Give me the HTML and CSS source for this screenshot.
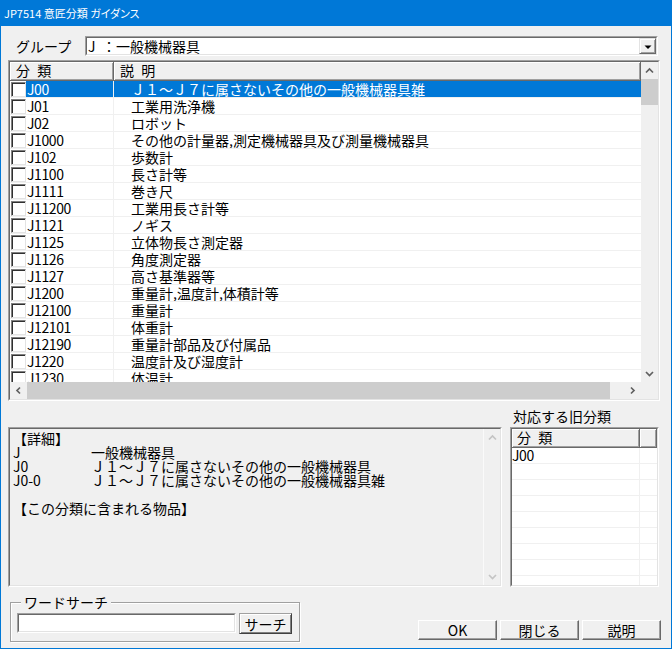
FILE: index.html
```html
<!DOCTYPE html>
<html lang="ja">
<head>
<meta charset="utf-8">
<title>JP7514 意匠分類 ガイダンス</title>
<link rel="stylesheet" href="styles.css">
</head>
<body>
<div class="window">
  <div class="titlebar">JP7514 意匠分類 ガイダンス</div>
  <div class="client">
    <div class="group-row">
      <span class="group-label">グループ</span>
      <div class="combo sunken">
        <div class="in combo-in">
          <span class="combo-text"><span class="combo-key">J</span>：一般機械器具</span>
          <span class="combo-btn raised"><svg width="14" height="15" viewBox="0 0 14 15"><polygon points="3.5,6.5 10.5,6.5 7,10" fill="#000"/></svg></span>
        </div>
      </div>
    </div>

    <div class="list sunken">
      <div class="in list-in">
        <div class="list-main">
          <div class="lhdr">
            <div class="hcell">分 類</div>
            <div class="hcell">説 明</div>
          </div>
          <div class="rows">
            <div class="row sel"><div class="cc"><span class="chk"></span><span class="code">J00</span></div><div class="dc">Ｊ１～Ｊ７に属さないその他の一般機械器具雑</div></div>
            <div class="row"><div class="cc"><span class="chk"></span><span class="code">J01</span></div><div class="dc">工業用洗浄機</div></div>
            <div class="row"><div class="cc"><span class="chk"></span><span class="code">J02</span></div><div class="dc">ロボット</div></div>
            <div class="row"><div class="cc"><span class="chk"></span><span class="code">J1000</span></div><div class="dc">その他の計量器,測定機械器具及び測量機械器具</div></div>
            <div class="row"><div class="cc"><span class="chk"></span><span class="code">J102</span></div><div class="dc">歩数計</div></div>
            <div class="row"><div class="cc"><span class="chk"></span><span class="code">J1100</span></div><div class="dc">長さ計等</div></div>
            <div class="row"><div class="cc"><span class="chk"></span><span class="code">J1111</span></div><div class="dc">巻き尺</div></div>
            <div class="row"><div class="cc"><span class="chk"></span><span class="code">J11200</span></div><div class="dc">工業用長さ計等</div></div>
            <div class="row"><div class="cc"><span class="chk"></span><span class="code">J1121</span></div><div class="dc">ノギス</div></div>
            <div class="row"><div class="cc"><span class="chk"></span><span class="code">J1125</span></div><div class="dc">立体物長さ測定器</div></div>
            <div class="row"><div class="cc"><span class="chk"></span><span class="code">J1126</span></div><div class="dc">角度測定器</div></div>
            <div class="row"><div class="cc"><span class="chk"></span><span class="code">J1127</span></div><div class="dc">高さ基準器等</div></div>
            <div class="row"><div class="cc"><span class="chk"></span><span class="code">J1200</span></div><div class="dc">重量計,温度計,体積計等</div></div>
            <div class="row"><div class="cc"><span class="chk"></span><span class="code">J12100</span></div><div class="dc">重量計</div></div>
            <div class="row"><div class="cc"><span class="chk"></span><span class="code">J12101</span></div><div class="dc">体重計</div></div>
            <div class="row"><div class="cc"><span class="chk"></span><span class="code">J12190</span></div><div class="dc">重量計部品及び付属品</div></div>
            <div class="row"><div class="cc"><span class="chk"></span><span class="code">J1220</span></div><div class="dc">温度計及び湿度計</div></div>
            <div class="row"><div class="cc"><span class="chk"></span><span class="code">J1230</span></div><div class="dc">体温計</div></div>
          </div>
        </div>
        <div class="vscroll">
          <span class="sb-btn"><svg width="17" height="17" viewBox="0 0 17 17"><polyline points="5,10.5 8.5,7 12,10.5" fill="none" stroke="#606060" stroke-width="1.7"/></svg></span>
          <span class="vthumb"></span>
          <span class="sb-fill"></span>
          <span class="sb-btn"><svg width="17" height="17" viewBox="0 0 17 17"><polyline points="5,7 8.5,10.5 12,7" fill="none" stroke="#606060" stroke-width="1.7"/></svg></span>
        </div>
        <div class="hscroll">
          <span class="sb-btn"><svg width="17" height="17" viewBox="0 0 17 17"><polyline points="10,5.5 7,8.5 10,11.5" fill="none" stroke="#606060" stroke-width="1.7"/></svg></span>
          <span class="hthumb"></span>
          <span class="sb-fill"></span>
          <span class="sb-btn"><svg width="17" height="17" viewBox="0 0 17 17"><polyline points="7,5.5 10,8.5 7,11.5" fill="none" stroke="#606060" stroke-width="1.7"/></svg></span>
        </div>
        <div class="corner"></div>
      </div>
    </div>

    <div class="lower">
      <div class="old-label">対応する旧分類</div>
      <div class="detail sunken">
        <div class="in detail-in">
          <div class="dtext">
            <div class="dline">【詳細】</div>
            <div class="dline"><span class="dcode">J</span>一般機械器具</div>
            <div class="dline"><span class="dcode">J0</span>Ｊ１～Ｊ７に属さないその他の一般機械器具</div>
            <div class="dline"><span class="dcode">J0-0</span>Ｊ１～Ｊ７に属さないその他の一般機械器具雑</div>
            <div class="dline"></div>
            <div class="dline">【この分類に含まれる物品】</div>
          </div>
          <div class="dscroll">
            <span class="sb-btn"><svg width="17" height="17" viewBox="0 0 17 17"><polyline points="5,10.5 8.5,7 12,10.5" fill="none" stroke="#c4c4c4" stroke-width="1.7"/></svg></span>
            <span class="sb-fill"></span>
            <span class="sb-btn"><svg width="17" height="17" viewBox="0 0 17 17"><polyline points="5,7 8.5,10.5 12,7" fill="none" stroke="#c4c4c4" stroke-width="1.7"/></svg></span>
          </div>
        </div>
      </div>
      <div class="oldlist sunken">
        <div class="in oldlist-in">
          <div class="ohdr">
            <div class="hcell">分 類</div>
            <div class="hcell"></div>
          </div>
          <div class="orow"><div class="oc">J00</div><div class="oc2"></div></div>
          <div class="orow"><div class="oc"></div><div class="oc2"></div></div>
          <div class="orow"><div class="oc"></div><div class="oc2"></div></div>
          <div class="orow"><div class="oc"></div><div class="oc2"></div></div>
          <div class="orow"><div class="oc"></div><div class="oc2"></div></div>
          <div class="orow"><div class="oc"></div><div class="oc2"></div></div>
          <div class="orow"><div class="oc"></div><div class="oc2"></div></div>
          <div class="orow"><div class="oc"></div><div class="oc2"></div></div>
          <div class="orow"><div class="oc"></div><div class="oc2"></div></div>
        </div>
      </div>
    </div>

    <div class="bottom">
      <fieldset class="wsearch">
        <legend>ワードサーチ</legend>
        <div class="search-row">
          <div class="search-input sunken"><div class="in input-in"></div></div>
          <button class="btn default">サーチ</button>
        </div>
      </fieldset>
      <div class="buttons">
        <button class="btn">OK</button>
        <button class="btn">閉じる</button>
        <button class="btn">説明</button>
      </div>
    </div>
  </div>
</div>
</body>
</html>
```

FILE: styles.css
```css
* { box-sizing: border-box; }
html, body { margin: 0; padding: 0; }
body {
  width: 672px;
  height: 649px;
  overflow: hidden;
  font-family: "Noto Sans CJK JP", "Noto Sans", sans-serif;
  font-size: 14px;
  color: #000;
  background: #f0f0f0;
}
.window {
  width: 672px;
  height: 649px;
  border: 1px solid #0078d7;
  border-top: 0;
  background: #f0f0f0;
  display: flex;
  flex-direction: column;
}
.titlebar {
  height: 26px;
  flex: none;
  background: #0078d7;
  color: #fff;
  font-size: 11px;
  line-height: 26px;
  padding-left: 3px;
  white-space: nowrap;
  font-feature-settings: "palt";
}
.client { flex: 1; display: flex; flex-direction: column; }

.sunken {
  border: 1px solid;
  border-color: #a0a0a0 #fff #fff #a0a0a0;
}
.sunken > .in {
  border: 1px solid;
  border-color: #696969 #e3e3e3 #e3e3e3 #696969;
  height: 100%;
}
.raised {
  background: #f0f0f0;
  border: 1px solid;
  border-color: #e3e3e3 #696969 #696969 #e3e3e3;
  box-shadow: inset 1px 1px #fff, inset -1px -1px #a0a0a0;
}

/* group row */
.group-row {
  display: flex;
  align-items: center;
  margin-top: 10px;
  height: 20px;
  padding-left: 15px;
}
.group-label { width: 69px; line-height: 20px; }
.combo { width: 573px; height: 20px; }
.combo-in { display: flex; background: #fff; }
.combo-text { flex: 1; line-height: 16px; padding-left: 1px; white-space: nowrap; }
.combo-key { display: inline-block; width: 14px; }
.combo-btn { width: 17px; height: 16px; display: flex; align-items: center; justify-content: center; }
.combo-btn svg { display: block; }

/* list */
.list { margin: 4px 0 0 7px; width: 652px; height: 341px; }
.list-in {
  display: grid;
  grid-template-columns: 631px 17px;
  grid-template-rows: 320px 17px;
  background: #fff;
}
.list-main { overflow: hidden; background: #fff; }
.lhdr, .row { display: grid; grid-template-columns: 104px 1fr; }
.lhdr { height: 19px; }
.hcell {
  background: #f0f0f0;
  height: 19px;
  line-height: 17px;
  padding-left: 6px;
  border-right: 1px solid #696969;
  border-bottom: 1px solid #696969;
  box-shadow: inset 1px 1px #fff, inset -1px -1px #a0a0a0;
  white-space: pre;
  word-spacing: 4px;
  overflow: hidden;
}
.rows { height: 301px; overflow: hidden; }
.row { height: 17px; border-bottom: 1px solid #f0f0f0; }
.cc { display: flex; border-right: 1px solid #f0f0f0; }
.chk {
  width: 15px;
  height: 15px;
  margin: 1px 0 0 1px;
  flex: none;
  background: #fff;
  border: 1px solid;
  border-color: #808080 #e3e3e3 #e3e3e3 #808080;
  box-shadow: inset 1px 1px #303030;
}
.code { flex: 1; line-height: 16px; padding-left: 1px; letter-spacing: -0.4px; }
.dc { line-height: 16px; padding-left: 17px; white-space: nowrap; overflow: hidden; }
.row.sel .code, .row.sel .dc { background: #0078d7; color: #fff; }

.sb-btn { width: 17px; height: 17px; flex: none; display: block; }
.sb-btn svg { display: block; }
.sb-fill { flex: 1; }
.vscroll { background: #f0f0f0; display: flex; flex-direction: column; }
.vthumb { height: 26px; background: #cdcdcd; flex: none; }
.hscroll { background: #f0f0f0; display: flex; }
.hthumb { width: 583px; background: #cdcdcd; flex: none; }
.corner { background: #f0f0f0; }

/* lower */
.lower {
  margin: 4px 0 0 7px;
  display: grid;
  grid-template-columns: 494px 149px;
  grid-template-rows: 22px 160px;
  column-gap: 8px;
}
.old-label { grid-column: 2; grid-row: 1; padding: 4px 0 0 3px; line-height: 14px; }
.detail { grid-column: 1; grid-row: 2; }
.detail-in { display: flex; background: #f0f0f0; }
.dtext { flex: 1; padding: 2px 0 0 3px; line-height: 14px; overflow: hidden; }
.dline { height: 14px; white-space: nowrap; }
.dcode { display: inline-block; width: 78px; }
.dscroll { width: 17px; display: flex; flex-direction: column; border-left: 1px solid #fafafa; }
.oldlist { grid-column: 2; grid-row: 2; }
.oldlist-in { background: #fff; overflow: hidden; }
.ohdr, .orow { display: grid; grid-template-columns: 128px 1fr; }
.ohdr .hcell { padding-left: 5px; }
.orow { height: 16px; border-bottom: 1px solid #f0f0f0; }
.oc { line-height: 15px; padding-left: 0; border-right: 1px solid #f0f0f0; letter-spacing: -0.4px; }

/* bottom */
.bottom {
  margin-top: 8px;
  display: flex;
  justify-content: space-between;
  align-items: flex-end;
  padding: 0 10px 0 9px;
}
.wsearch {
  width: 290px;
  margin: 0;
  padding: 4px 6px 7px 6px;
  border: 1px solid #a0a0a0;
  box-shadow: 1px 1px 0 #fff, inset 1px 1px 0 #fff;
}
.wsearch legend {
  margin-left: 4px;
  padding: 0 3px;
  line-height: 14px;
  font-size: 14px;
  background: #f0f0f0;
}
.search-row { display: flex; align-items: flex-start; }
.search-input { width: 219px; height: 20px; }
.input-in { background: #fff; }
.btn {
  font-family: inherit;
  font-size: 14px;
  color: #000;
  background: #f0f0f0;
  padding: 0;
  margin: 0;
  border: 1px solid;
  border-color: #fff #696969 #696969 #fff;
  box-shadow: inset -1px -1px #a0a0a0;
  line-height: 18px;
  height: 20px;
}
.btn.default {
  margin-left: 3px;
  width: 53px;
  height: 21px;
  border-color: #a0a0a0 #404040 #404040 #a0a0a0;
  box-shadow: inset 1px 1px #fff, inset -1px -1px #808080;
}
.buttons { display: flex; gap: 3px; margin-bottom: 2px; }
.buttons .btn { width: 79px; }
```
